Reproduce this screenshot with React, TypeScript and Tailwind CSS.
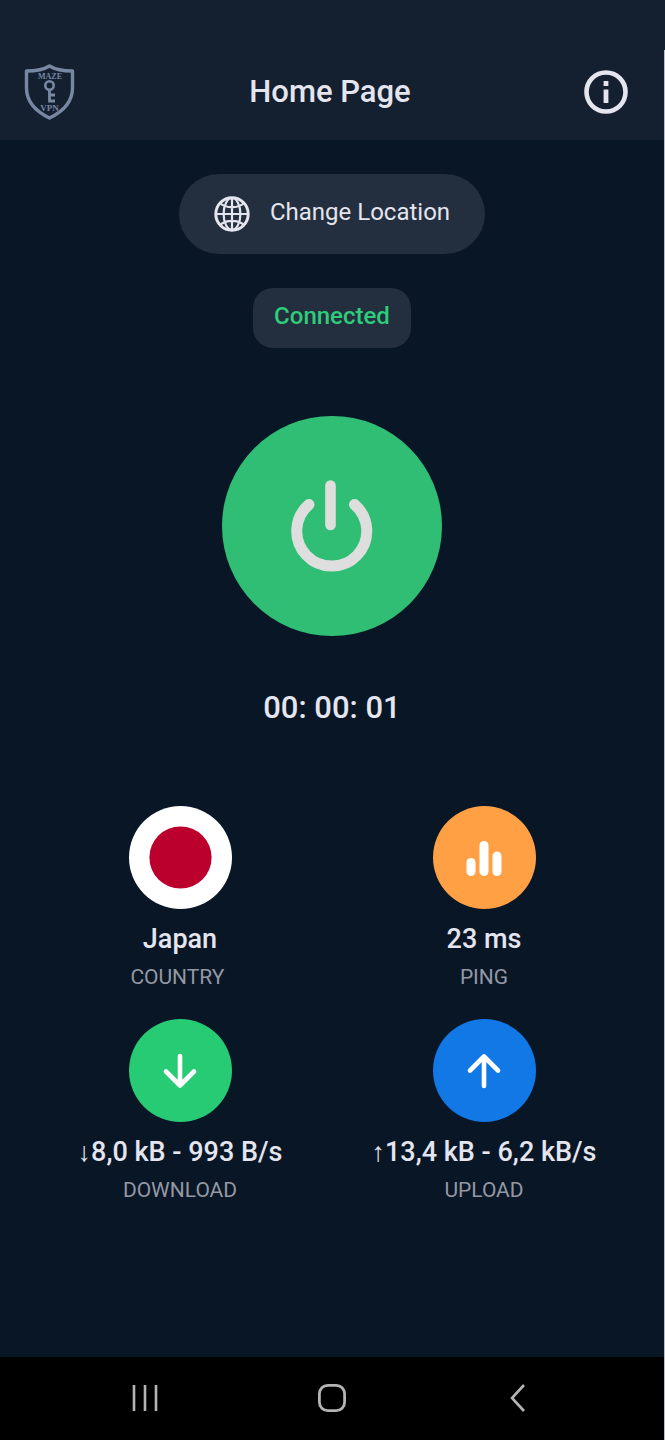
import type { ReactNode } from 'react';
import clsx from 'clsx';

type Stat = {
  label: string;
  value: string;
  color: string;
  icon: ReactNode;
};

const stats: Stat[] = [
  { label: 'COUNTRY ', value: 'Japan', color: 'bg-white', icon: <JapanDisc /> },
  { label: 'PING', value: '23 ms', color: 'bg-[#ffa044]', icon: <BarsIcon /> },
  { label: 'DOWNLOAD', value: '↓8,0 kB - 993 B/s', color: 'bg-[#27cb73]', icon: <ArrowIcon direction="down" /> },
  { label: 'UPLOAD', value: '↑13,4 kB - 6,2 kB/s', color: 'bg-[#1278e6]', icon: <ArrowIcon direction="up" /> },
];

function Logo() {
  return (
    <svg width="52" height="58" viewBox="0 0 52 58" fill="none" aria-hidden="true">
      <path
        d="M25.5 3C19 7 11 8 2.5 8V25C2.5 39 11 48 25.5 55C40 48 48.5 39 48.5 25V8C40 8 32 7 25.5 3Z"
        stroke="#7888a3"
        strokeWidth="3.4"
        strokeLinejoin="round"
      />
      <g fill="#7888a3" fontFamily="'Liberation Serif', serif" fontWeight="700" textAnchor="middle">
        <text x="26" y="16" fontSize="8">MAZE</text>
        <text x="25.5" y="48" fontSize="9">VPN</text>
      </g>
      <circle cx="25.5" cy="22.5" r="4.2" stroke="#7888a3" strokeWidth="2.6" />
      <path d="M25.5 26.5V39.4M25.5 32H31M25.5 38H31" stroke="#7888a3" strokeWidth="2.8" />
    </svg>
  );
}

function InfoIcon() {
  return (
    <svg width="44" height="44" viewBox="0 0 44 44" fill="none" aria-hidden="true">
      <circle cx="22" cy="22" r="19.5" stroke="#e4e5ee" strokeWidth="4.6" />
      <path d="M19.6 11H24.4V16H19.6ZM19.6 19.6H24.4V33H19.6Z" fill="#e4e5ee" />
    </svg>
  );
}

function GlobeIcon() {
  return (
    <svg width="36" height="36" viewBox="0 0 36 36" fill="none" stroke="#e4e5ee" aria-hidden="true">
      <circle cx="18" cy="18" r="16.2" strokeWidth="3" />
      <g strokeWidth="2.2">
        <ellipse cx="18" cy="18" rx="8.4" ry="16" />
        <path d="M18 2V34M2 18H34M6 7C12 12.6 24 12.6 30 7M6 29C12 23.4 24 23.4 30 29" />
      </g>
    </svg>
  );
}

function PowerIcon() {
  return (
    <svg width="82" height="94" viewBox="0 0 82 94" fill="none" stroke="#dedede" strokeLinecap="round" aria-hidden="true">
      <path d="M18 25.5A35 35 0 1 0 63.5 25.5" strokeWidth="11" />
      <path d="M39.5 6.5V46" strokeWidth="10.6" />
    </svg>
  );
}

function JapanDisc() {
  return (
    <svg width="63" height="63" viewBox="0 0 62 62" aria-hidden="true">
      <circle cx="31" cy="31" r="30.6" fill="#bc002d" />
    </svg>
  );
}

function BarsIcon() {
  return (
    <svg width="36" height="36" viewBox="0 0 36 36" fill="#fff" aria-hidden="true">
      <rect x="0.5" y="18" width="9" height="18" rx="4.5" />
      <rect x="13.5" y="1" width="9" height="35" rx="4.5" />
      <rect x="26.5" y="11.5" width="9" height="24.5" rx="4.5" />
    </svg>
  );
}

function ArrowIcon({ direction }: { direction: 'up' | 'down' }) {
  return (
    <svg
      width="36"
      height="36"
      viewBox="0 0 36 36"
      fill="none"
      stroke="#fff"
      strokeWidth="4.6"
      strokeLinecap="round"
      strokeLinejoin="round"
      className={clsx(direction === 'up' && 'rotate-180')}
      aria-hidden="true"
    >
      <path d="M18 3V32M4 18.5L18 32.5L32 18.5" />
    </svg>
  );
}

function StatCard({ label, value, color, icon }: Stat) {
  return (
    <div className="flex flex-col items-center">
      <div className={clsx('flex h-[103px] w-[103px] items-center justify-center rounded-full', color)}>{icon}</div>
      <p className="mt-3 text-[27px] leading-9 font-medium whitespace-nowrap">{value}</p>
      <p className="mt-1 text-[21px] leading-8 whitespace-pre text-[#9498a3]">{label}</p>
    </div>
  );
}

function Header() {
  return (
    <header className="flex h-[140px] items-center justify-between bg-[#141f30] px-6 pt-11">
      <Logo />
      <h1 className="text-[31px] leading-10 font-medium">Home Page</h1>
      <button type="button" aria-label="Info" className="mr-3">
        <InfoIcon />
      </button>
    </header>
  );
}

function NavBar() {
  return (
    <nav className="grid h-[83px] grid-cols-3 items-center justify-items-center bg-black px-13 pb-0.5">
      <button type="button" aria-label="Recents">
        <svg width="28" height="28" viewBox="0 0 28 28" stroke="#b4b4b4" strokeWidth="2.6" aria-hidden="true">
          <path d="M3 1V27M14 1V27M25 1V27" />
        </svg>
      </button>
      <button type="button" aria-label="Home">
        <svg width="28" height="28" viewBox="0 0 28 28" fill="none" stroke="#b4b4b4" strokeWidth="2.8" aria-hidden="true">
          <rect x="1.4" y="1.4" width="25.2" height="25.2" rx="8.4" />
        </svg>
      </button>
      <button type="button" aria-label="Back">
        <svg width="28" height="28" viewBox="0 0 28 28" fill="none" stroke="#b4b4b4" strokeWidth="2.6" aria-hidden="true">
          <path d="M19 1L7 14L19 27" />
        </svg>
      </button>
    </nav>
  );
}

export default function App() {
  return (
    <div className="relative bg-black font-[Roboto,sans-serif] text-[#e4e5ee]">
      <div className="mr-px flex min-h-screen flex-col bg-[#081626]">
        <Header />
        <main className="flex flex-1 flex-col items-center pt-[34px]">
          <button type="button" className="flex h-20 items-center gap-5 rounded-full bg-[#232e3e] px-[35px] text-2xl">
            <GlobeIcon />
            <span className="pb-1">Change Location</span>
          </button>
          <p className="mt-[34px] flex h-[60px] items-center rounded-[20px] bg-[#232e3e] px-[21px] pb-1 text-2xl font-medium text-[#2ecc7b]">
            Connected
          </p>
          <button
            type="button"
            aria-label="Disconnect"
            className="mt-[68px] flex h-[220px] w-[220px] items-center justify-center rounded-full bg-[#30be75]"
          >
            <PowerIcon />
          </button>
          <p className="mt-[52px] text-[31px] leading-10 font-medium">00: 00: 01</p>
          <div className="mt-[78px] grid w-full grid-cols-2 gap-y-[26px] px-7">
            {stats.map((stat) => (
              <StatCard key={stat.label} {...stat} />
            ))}
          </div>
        </main>
        <NavBar />
      </div>
      {/* scroll track */}
      <div className="absolute top-0 right-0 h-[50px] w-px bg-[#141f30]" />
      <div className="absolute top-[50px] right-0 bottom-0 w-px bg-[#b9bfc8]" />
    </div>
  );
}
